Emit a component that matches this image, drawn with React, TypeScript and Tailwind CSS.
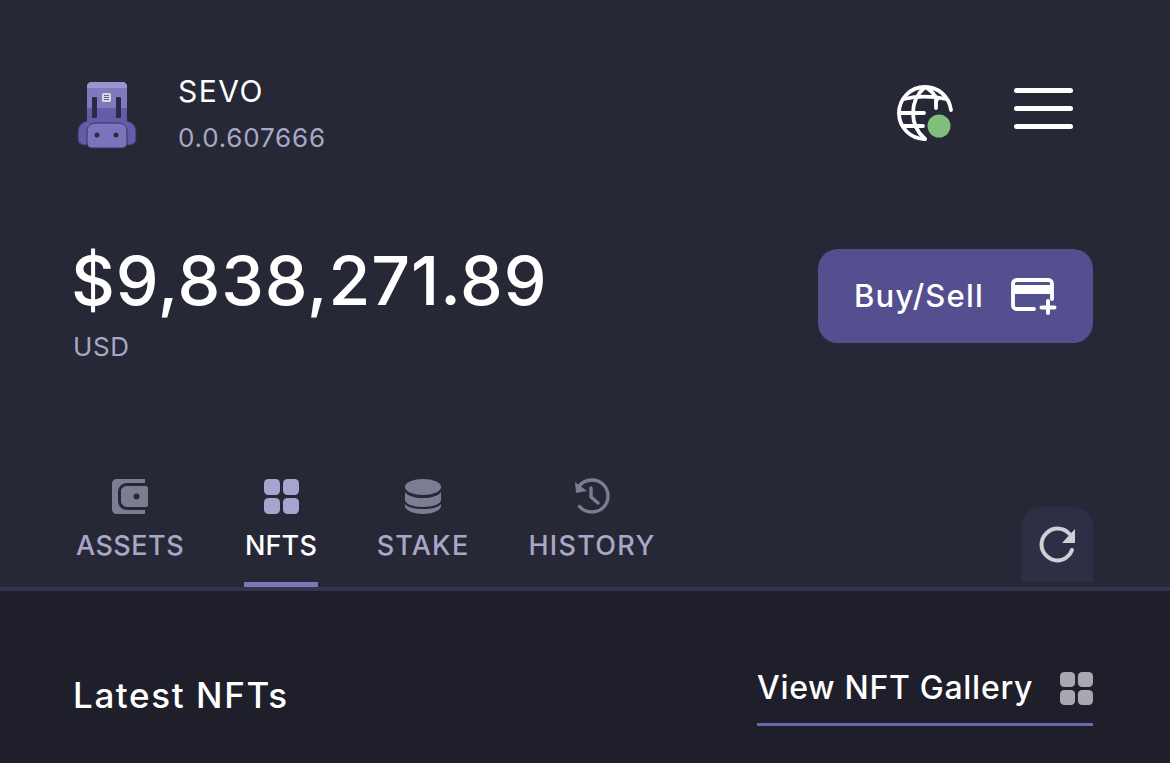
import type { ReactNode } from 'react';

const font = { fontFamily: 'Inter, "Open Sans", sans-serif' };

function Backpack() {
  return (
    <svg width="60" height="68" viewBox="0 0 60 68" className="block">
      <path d="M10 40c-5 1-9 5-9 10v8c0 4 3 6 7 6h6V40z" fill="#625da8" stroke="#35345c" strokeWidth="1" />
      <path d="M50 40c5 1 9 5 9 10v8c0 4-3 6-7 6h-6V40z" fill="#625da8" stroke="#35345c" strokeWidth="1" />
      <path d="M10 6c0-3 2-5 5-5h30c3 0 5 2 5 5v56c0 3-2 5-5 5H15c-3 0-5-2-5-5z" fill="#6b64b0" />
      <path d="M10 6c0-3 2-5 5-5h30c3 0 5 2 5 5v22H10z" fill="#7f79bd" />
      <path d="M10 6c0-3 2-5 5-5h30c3 0 5 2 5 5v1H10z" fill="#9a95cf" />
      <rect x="10" y="27" width="40" height="16" fill="#625ca9" />
      <path d="M10 50c0-5 4-8 9-8h22c5 0 9 3 9 8v12c0 3-2 5-5 5H15c-3 0-5-2-5-5z" fill="#7a74bd" stroke="#35345c" strokeWidth="1" />
      <rect x="15" y="16" width="5" height="21" rx="1" fill="#2b2a45" />
      <rect x="39" y="16" width="5" height="21" rx="1" fill="#2b2a45" />
      <rect x="25" y="12" width="9" height="9" rx="1.500" fill="#d8d7e6" />
      <path d="M27 14.500h5M27 16.500h5M27 18.500h5" stroke="#5a5878" strokeWidth="0.9" fill="none" />
      <circle cx="20" cy="54" r="2.500" fill="#2b2a45" />
      <circle cx="39" cy="54" r="2.500" fill="#2b2a45" />
    </svg>
  );
}

function Globe() {
  return (
    <svg width="58" height="58" viewBox="0 0 58 58" fill="none" className="block">
      <g stroke="#fff" strokeWidth="3.800" strokeLinecap="round">
        <path d="M54 26C52 12 41 3 28 3 13 3 2 15 2 29c0 14 11 26 26 26" />
        <path d="M28 3c-8 7-12 16-12 26s4 19 12 26" />
        <path d="M28 3c6 3 10 8 12 13" />
        <path d="M7 15c13-3 28-3 42 0" />
        <path d="M2 29h25" />
        <path d="M7 42h19" />
        <path d="M39 16v8" />
      </g>
      <circle cx="42" cy="42" r="11.500" fill="#7fbe7d" />
    </svg>
  );
}

function CardPlus() {
  return (
    <svg width="46" height="37" viewBox="0 0 46 37" fill="none" className="block">
      <path d="M23 31H5.500A3.500 3.500 0 0 1 2 27.500v-22A3.500 3.500 0 0 1 5.500 2h32A3.500 3.500 0 0 1 41 5.500V21" stroke="#fff" strokeWidth="3.800" strokeLinecap="round" />
      <rect x="2" y="7" width="39" height="9" fill="#fff" />
      <path d="M37 23v12M30.500 29.500h13" stroke="#fff" strokeWidth="4" strokeLinecap="round" />
    </svg>
  );
}

function WalletIcon() {
  return (
    <svg width="36" height="35" viewBox="0 0 36 35" className="block">
      <path d="M5 0h28v4H15C10 4 6 8 6 13v9c0 5 4 9 9 9h18v4H5c-3 0-5-2-5-5V5c0-3 2-5 5-5z" fill="#7c7c93" />
      <path d="M15 7h19c1 0 2 1 2 2v17c0 1-1 2-2 2H15c-3 0-6-3-6-6v-10c0-3 3-5 6-5z" fill="#7c7c93" />
      <circle cx="24.500" cy="17.500" r="3" fill="#272835" />
    </svg>
  );
}

function GridIcon({ color, size }: { color: string; size: number }) {
  return (
    <svg width={size} height={size} viewBox="0 0 35 35" className="block">
      <rect x="0" y="0" width="16" height="16" rx="4.500" fill={color} />
      <rect x="19" y="0" width="16" height="16" rx="4.500" fill={color} />
      <rect x="0" y="19" width="16" height="16" rx="4.500" fill={color} />
      <rect x="19" y="19" width="16" height="16" rx="4.500" fill={color} />
    </svg>
  );
}

function CoinsIcon() {
  return (
    <svg width="36" height="35" viewBox="0 0 36 35" className="block">
      <ellipse cx="18" cy="8" rx="18" ry="8" fill="#7c7c93" />
      <path d="M0 13c3 4 10 6 18 6s15-2 18-6v8c0 4-8 7-18 7S0 25 0 21z" fill="#7c7c93" />
      <path d="M0 25c3 4 10 5 18 5s15-1 18-5v2c0 4-8 8-18 8S0 31 0 27z" fill="#7c7c93" />
    </svg>
  );
}

function HistoryIcon() {
  return (
    <svg width="36" height="36" viewBox="0 0 36 36" fill="none" className="block">
      <path d="M4.500 9C7.500 4.500 12.500 2 18 2c9 0 16 7 16 16s-7 16-16 16c-5 0-9.500-2-12.500-5.500" stroke="#7c7c93" strokeWidth="3.400" strokeLinecap="round" />
      <path d="M1 4l1 11 11-2z" fill="#7c7c93" />
      <path d="M17 10v9l7 6" stroke="#7c7c93" strokeWidth="3.400" strokeLinecap="round" strokeLinejoin="round" />
    </svg>
  );
}

function RefreshIcon() {
  return (
    <svg width="37" height="37" viewBox="0 0 37 37" fill="none" className="block">
      <path d="M33 24c-2 6-8 10.500-14.500 10.500C10 34.500 2.500 27 2.500 18.500S10 2.500 18.500 2.500c5 0 9 2 12 5.500" stroke="#cfcfd6" strokeWidth="4" strokeLinecap="round" />
      <path d="M36 3v14H23z" fill="#cfcfd6" />
    </svg>
  );
}

function Tab({
  icon,
  label,
  active,
  className,
  labelClass,
}: {
  icon: ReactNode;
  label: string;
  active?: boolean;
  className: string;
  labelClass: string;
}) {
  return (
    <div className={`flex flex-col items-center ${className}`}>
      <div className="flex h-[36px] items-center justify-center">{icon}</div>
      <span className={`mt-[16px] whitespace-nowrap text-[27px] font-medium leading-[32px] ${labelClass} ${active ? 'text-white' : 'text-[#a8a7c8]'}`}>
        {label}
      </span>
      <div className={`mt-[20px] h-[5px] w-full ${active ? 'bg-[#7a78b8]' : ''}`} />
    </div>
  );
}

export default function App() {
  return (
    <div className="flex h-[763px] w-[1170px] flex-col overflow-hidden bg-[#1f1e2b] text-white" style={font}>
      <div className="flex h-[587px] shrink-0 flex-col bg-[#272835] pl-[73px] pr-[77px]">
        <div className="mt-[71px] flex items-start justify-between">
          <div className="flex items-start">
            <div className="ml-[4px] mt-[10px]"><Backpack /></div>
            <div className="ml-[41px]">
              <div className="text-[30px] leading-[40px] tracking-[1.5px]">SEVO</div>
              <div className="mt-[11px] text-[26px] leading-[32px] tracking-[0.8px] text-[#a8a7c8]">0.0.607666</div>
            </div>
          </div>
          <div className="mr-[20px] mt-[13px] flex items-start">
            <Globe />
            <div className="ml-[59px] mt-[4px] flex w-[59px] flex-col gap-[13px]">
              <div className="h-[5px] rounded-full bg-white" />
              <div className="h-[5px] rounded-full bg-white" />
              <div className="h-[5px] rounded-full bg-white" />
            </div>
          </div>
        </div>

        <div className="mt-[95px] flex items-start justify-between">
          <div className="ml-[-2px] mt-[-8px]">
            <div className="text-[68px] font-medium leading-[78px] tracking-[0.9px]">$9,838,271.89</div>
            <div className="ml-[2px] mt-[12px] text-[26px] leading-[32px] tracking-[0.6px] text-[#a8a7c8]">USD</div>
          </div>
          <div className="flex h-[94px] w-[275px] items-center justify-center gap-[27px] rounded-[20px] bg-[#54508f]">
            <span className="text-[31px] font-medium tracking-[1.2px]">Buy/Sell</span>
            <CardPlus />
          </div>
        </div>

        <div className="mt-auto flex items-end justify-between">
          <div className="flex items-end">
            <Tab icon={<WalletIcon />} label="ASSETS" labelClass="tracking-[0.5px]" className="ml-[3px] w-[108px]" />
            <Tab icon={<GridIcon color="#a6a5cf" size={35} />} label="NFTS" labelClass="tracking-[0.2px]" active className="ml-[60px] w-[74px]" />
            <Tab icon={<CoinsIcon />} label="STAKE" labelClass="tracking-[1.2px]" className="ml-[59px] w-[92px]" />
            <Tab icon={<HistoryIcon />} label="HISTORY" labelClass="tracking-[1.3px]" className="ml-[60px] w-[126px]" />
          </div>
          <div className="mb-[5px] flex h-[75px] w-[72px] items-center justify-center rounded-t-[20px] bg-[#2e2f47]">
            <RefreshIcon />
          </div>
        </div>
      </div>

      <div className="h-[4px] shrink-0 bg-[#34344d]" />

      <div className="flex items-start justify-between pl-[73px] pr-[77px] pt-[77px]">
        <div className="mt-[7px] text-[35px] font-medium leading-[40px] tracking-[1.6px]">Latest NFTs</div>
        <div className="flex w-[336px] items-center justify-between border-b-[3px] border-[#6e67ad] pb-[15px]">
          <span className="text-[32px] font-medium leading-[40px] tracking-[0.7px]">View NFT Gallery</span>
          <GridIcon color="#a8a8ae" size={33} />
        </div>
      </div>
    </div>
  );
}
